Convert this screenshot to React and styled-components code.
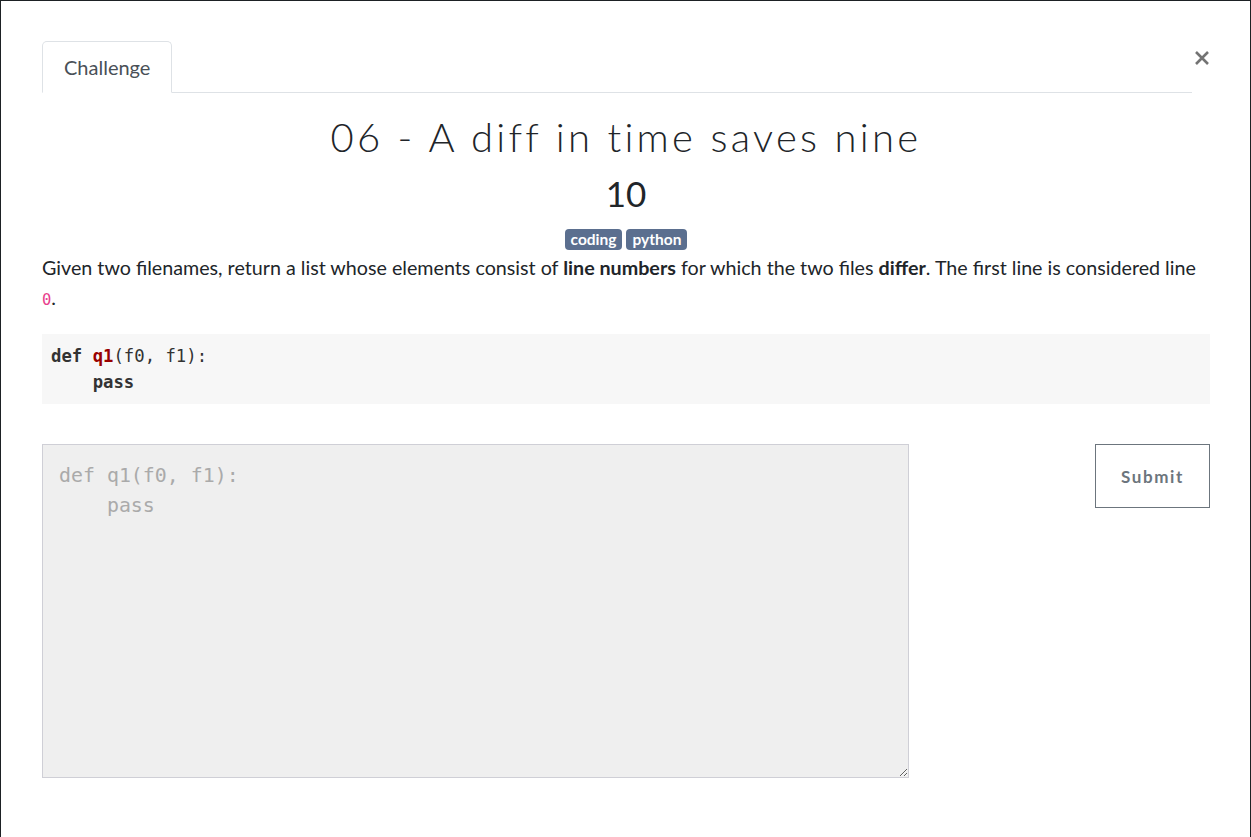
import React from "react";
import styled, { createGlobalStyle } from "styled-components";

const Global = createGlobalStyle`
  html, body { margin: 0; padding: 0; }
  body {
    background: #1d2124;
    font-family: Lato, "Open Sans", sans-serif;
    color: #212529;
  }
`;

const Modal = styled.div`
  margin: 1px 1px 0 1px;
  background: #fff;
  min-height: 836px;
  box-sizing: border-box;
  padding: 40px 40px 0 41px;
`;

const HeaderRow = styled.div`
  display: flex;
  align-items: flex-start;
`;

const Tabs = styled.ul`
  flex: 1;
  display: flex;
  list-style: none;
  margin: 0;
  padding: 0;
  border-bottom: 1px solid #dee2e6;
`;

const Tab = styled.li`
  height: 52px;
  box-sizing: border-box;
  margin-bottom: -1px;
  padding: 0 21px;
  display: flex;
  align-items: center;
  border: 1px solid #dee2e6;
  border-bottom: 1px solid #fff;
  border-radius: 5px 5px 0 0;
  font-size: 20px;
  color: #495057;
  background: #fff;
`;

const Close = styled.button`
  border: 0;
  background: transparent;
  padding: 0;
  margin: 7px 0 0 1px;
  width: 17px;
  height: 20px;
  display: flex;
  align-items: center;
  justify-content: center;
  cursor: pointer;
`;

const Title = styled.h2`
  margin: 20px 0 0;
  text-align: center;
  font-family: Lato, sans-serif;
  font-weight: 300;
  font-size: 40px;
  letter-spacing: 3.3px;
  line-height: 48px;
  color: #212529;
`;

const Value = styled.h3`
  margin: 11px 0 0;
  text-align: center;
  font-family: Lato, sans-serif;
  font-weight: 400;
  font-size: 35px;
  line-height: 42px;
  color: #212529;
`;

const Tags = styled.div`
  display: flex;
  justify-content: center;
  gap: 4px;
  margin-top: 15px;
`;

const Tag = styled.span`
  background: #5b6f8f;
  color: #fff;
  font-weight: 700;
  font-size: 15.5px;
  line-height: 21px;
  padding: 0 6px;
  border-radius: 4px;
`;

const Description = styled.p`
  margin: 3px 0 0;
  font-size: 19.7px;
  line-height: 30px;
  color: #212529;
  b { font-weight: 700; }
`;

const InlineCode = styled.code`
  font-family: "DejaVu Sans Mono", monospace;
  font-size: 15.5px;
  color: #e83e8c;
`;

const CodeBlock = styled.pre`
  margin: 19px 0 0;
  background: #f7f7f7;
  padding: 9px 9px;
  font-family: "DejaVu Sans Mono", monospace;
  font-size: 17.3px;
  line-height: 26px;
  color: #333;
`;

const Kw = styled.span`
  font-weight: 700;
  color: ${(p) => p.$color || "#333"};
`;

const SubmitRow = styled.div`
  display: flex;
  align-items: flex-start;
  margin-top: 40px;
`;

const Editor = styled.textarea`
  width: 867px;
  height: 334px;
  box-sizing: border-box;
  background: #efefef;
  border: 1px solid #cfcfd6;
  padding: 16px 16px;
  font-family: "DejaVu Sans Mono", monospace;
  font-size: 19.9px;
  line-height: 30px;
  color: #333;
  resize: vertical;
  outline: none;
  &::placeholder { color: #aaa; }
`;

const SubmitCol = styled.div`
  flex: 1;
  display: flex;
  justify-content: flex-end;
`;

const SubmitButton = styled.button`
  width: 115px;
  height: 64px;
  box-sizing: border-box;
  background: #fff;
  border: 1px solid #6c757d;
  font-family: Lato, sans-serif;
  font-weight: 700;
  font-size: 17px;
  letter-spacing: 1.6px;
  color: #6c757d;
  cursor: pointer;
`;

export default function App() {
  return (
    <>
      <Global />
      <Modal>
        <HeaderRow>
          <Tabs>
            <Tab>Challenge</Tab>
          </Tabs>
          <Close aria-label="Close">
            <svg width="16" height="16" viewBox="0 0 16 16">
              <path d="M2 2 L14 14 M14 2 L2 14" stroke="#737373" strokeWidth="2.6" />
            </svg>
          </Close>
        </HeaderRow>
        <Title>06 - A diff in time saves nine</Title>
        <Value>10</Value>
        <Tags>
          <Tag>coding</Tag>
          <Tag>python</Tag>
        </Tags>
        <Description>
          Given two filenames, return a list whose elements consist of <b>line numbers</b> for which the two files <b>differ</b>. The first line is considered line <InlineCode>0</InlineCode>.
        </Description>
        <CodeBlock>
          <Kw>def</Kw> <Kw $color="#990000">q1</Kw>(f0, f1):{"\n"}    <Kw>pass</Kw>
        </CodeBlock>
        <SubmitRow>
          <Editor placeholder={"def q1(f0, f1):\n    pass"} />
          <SubmitCol>
            <SubmitButton>Submit</SubmitButton>
          </SubmitCol>
        </SubmitRow>
      </Modal>
    </>
  );
}
